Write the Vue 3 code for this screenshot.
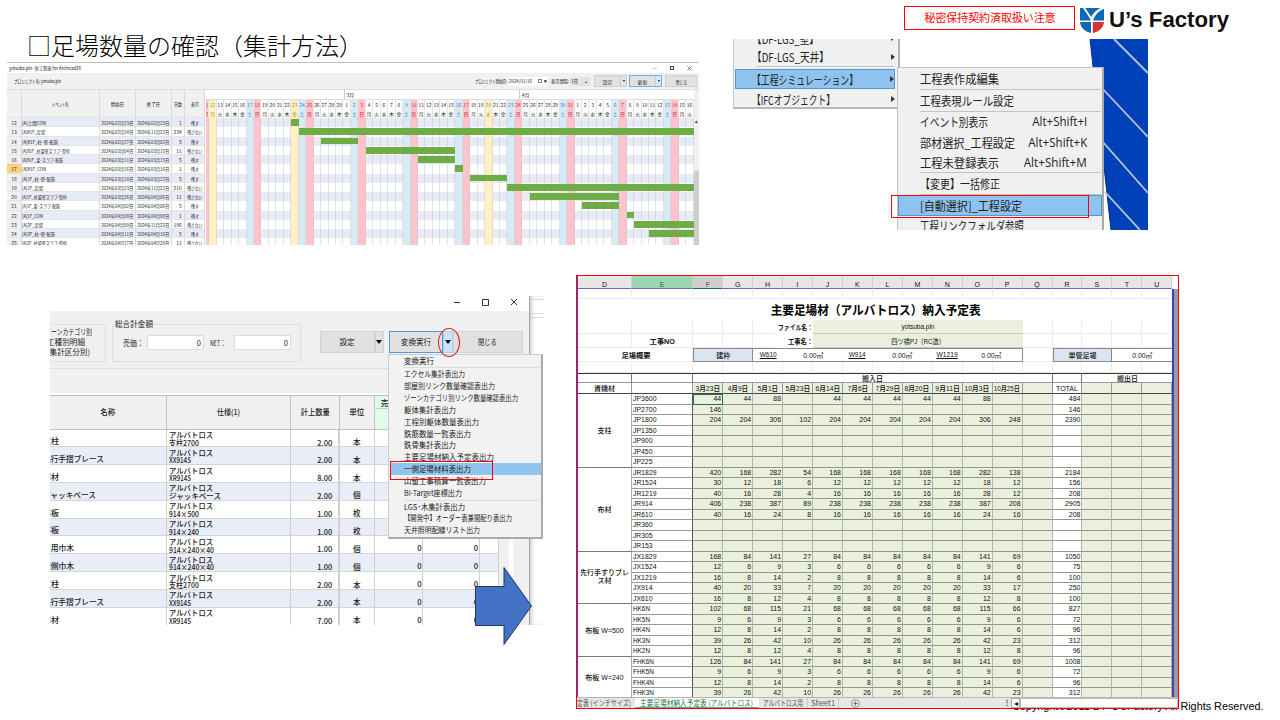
<script setup>
// Condenses or widens a run of text horizontally so that it takes the given width.
// With the `tight` modifier the layout width follows the drawn width.
const vFit = {
  mounted(el, { value, modifiers }) {
    if (!value) return
    const w = el.getBoundingClientRect().width
    if (!w) return
    el.style.transform = `scaleX(${value / w})`
    if (modifiers.tight) el.style.marginRight = `${value - w}px`
  },
}

/* ---------- schedule chart ---------- */
const weekdays = ['日', '月', '火', '水', '木', '金', '土']
const holidays = [12, 23, 49]
const days = []
for (let n = 11; n <= 76; n++) {
  const label = n <= 29 ? n : n <= 60 ? n - 29 : n - 60
  const wd = (n - 11) % 7
  const kind = holidays.includes(n) ? 'hol' : wd === 0 ? 'sun' : wd === 6 ? 'sat' : ''
  days.push({ n, label: n === 11 ? '1' : label, wd: weekdays[wd], kind, col: n - 10 })
}
// [no, name, name width, start, end, days, shown, first day, last day]; days count from Feb 1
const tasks = [
  [12, '[A]土間CON', 24, '2024年02月23日', '2024年02月23日', 1, '残す', 23, 23],
  [13, '[A]B1F_足場', 23, '2024年02月24日', '2024年11月22日', 234, '残さない', 24, 76],
  [14, '[A]B1F_柱･壁-配筋', 36, '2024年02月27日', '2024年03月02日', 5, '残す', 27, 31],
  [15, '[A]B1F_柱梁壁スラブ-型枠', 48, '2024年03月04日', '2024年03月15日', 11, '残さない', 33, 44],
  [16, '[A]B1F_梁･スラブ-配筋', 41, '2024年03月11日', '2024年03月15日', 5, '残す', 40, 44],
  [17, '[A]B1F_CON', 24, '2024年03月16日', '2024年03月16日', 1, '残す', 45, 45],
  [18, '[A]1F_柱･壁-配筋', 33, '2024年03月18日', '2024年03月22日', 5, '残す', 47, 51],
  [19, '[A]1F_足場', 21, '2024年03月23日', '2024年11月22日', 210, '残さない', 52, 76],
  [20, '[A]1F_柱梁壁スラブ-型枠', 45, '2024年03月26日', '2024年04月06日', 11, '残さない', 55, 66],
  [21, '[A]1F_梁･スラブ-配筋', 38, '2024年04月02日', '2024年04月06日', 5, '残す', 62, 66],
  [22, '[A]1F_CON', 21, '2024年04月08日', '2024年04月08日', 1, '残す', 68, 68],
  [23, '[A]2F_足場', 21, '2024年04月09日', '2024年11月22日', 196, '残さない', 69, 76],
  [24, '[A]2F_柱･壁-配筋', 33, '2024年04月11日', '2024年04月16日', 5, '残す', 71, 76],
  [25, '[A]2F_柱梁壁スラブ-型枠', 45, '2024年04月17日', '2024年04月29日', 11, '残さない', 0, 0],
]

/* ---------- quantity table ---------- */
const items = [
  ['支柱', 16, '支柱2700', 30, '2.00', '本'],
  ['先行手摺ブレース', 61, 'XX914S', 22, '2.00', '本'],
  ['布材', 16, 'XR914S', 22, '8.00', '本'],
  ['ジャッキベース', 53, 'ジャッキベース', 52, '2.00', '個'],
  ['布板', 16, '914×500', 30, '1.00', '枚'],
  ['布板', 16, '914×240', 30, '1.00', '枚'],
  ['専用巾木', 31, '914×240×40', 45, '1.00', '個'],
  ['両側巾木', 31, '914×240×40', 45, '1.00', '個'],
  ['支柱', 16, '支柱2700', 30, '2.00', '本'],
  ['先行手摺ブレース', 61, 'XX914S', 22, '2.00', '本'],
  ['布材', 16, 'XR914S', 22, '7.00', '本'],
]
const menu = [
  ['変換実行', 30], null,
  ['エクセル集計表出力', 61], ['部屋別リンク数量確認表出力', 91], ['ゾーンカテゴリ別リンク数量確認表出力', 114],
  ['躯体集計表出力', 52], ['工程別躯体数量表出力', 75], ['鉄筋数量一覧表出力', 67], ['鉄骨集計表出力', 52],
  ['主要足場材納入予定表出力', 90], ['一側足場材料表出力', 67, 'on'], ['山留工事積算一覧表出力', 82],
  ['BI-Target座標出力', 58], null,
  ['LGS･木集計表出力', 61], ['【開発中】オーダー表兼間配り表出力', 108], ['天井照明配線リスト出力', 76],
]

/* ---------- worksheet ---------- */
const letters = 'DEFGHIJKLMNOPQRSTU'.split('')
const dates = ['3月23日', '4月9日', '5月1日', '5月23日', '6月14日', '7月6日', '7月29日', '8月20日', '9月11日', '10月3日', '10月25日']
const row = (name, a, b, c, d, f, g, total) => [name, [a, b, c, d, b, b, b, b, b, f, g, '', total, '', '', '']]
const blank = (name) => row(name, '', '', '', '', '', '', '')
const groups = [
  ['支柱', [
    ['JP3600', [44, 44, 88, '', 44, 44, 44, 44, 44, 88, '', '', 484, '', '', '']],
    ['JP2700', [146, '', '', '', '', '', '', '', '', '', '', '', 146, '', '', '']],
    row('JP1800', 204, 204, 306, 102, 306, 248, 2390),
    blank('JP1350'), blank('JP900'), blank('JP450'), blank('JP225')]],
  ['布材', [
    row('JR1829', 420, 168, 282, 54, 282, 138, 2184), row('JR1524', 30, 12, 18, 6, 18, 12, 156),
    row('JR1219', 40, 16, 28, 4, 28, 12, 208), row('JR914', 406, 238, 387, 89, 387, 208, 2905),
    row('JR610', 40, 16, 24, 8, 24, 16, 208), blank('JR360'), blank('JR305'), blank('JR153')]],
  ['先行手すりブレス材', [
    row('JX1829', 168, 84, 141, 27, 141, 69, 1050), row('JX1524', 12, 6, 9, 3, 9, 6, 75),
    row('JX1219', 16, 8, 14, 2, 14, 6, 100), row('JX914', 40, 20, 33, 7, 33, 17, 250),
    row('JX610', 16, 8, 12, 4, 12, 8, 100)]],
  ['布板 W=500', [
    row('HK6N', 102, 68, 115, 21, 115, 66, 827), row('HK5N', 9, 6, 9, 3, 9, 6, 72),
    row('HK4N', 12, 8, 14, 2, 14, 6, 96), row('HK3N', 39, 26, 42, 10, 42, 23, 312),
    row('HK2N', 12, 8, 12, 4, 12, 8, 96)]],
  ['布板 W=240', [
    row('FHK6N', 126, 84, 141, 27, 141, 69, 1008), row('FHK5N', 9, 6, 9, 3, 9, 6, 72),
    row('FHK4N', 12, 8, 14, 2, 14, 6, 96), row('FHK3N', 39, 26, 42, 10, 42, 23, 312)]],
]
</script>

<template>
  <main class="slide">
    <h1 class="heading">□足場数量の確認（集計方法）</h1>
    <div class="notice"><span v-fit="131">秘密保持契約済取扱い注意</span></div>
    <div class="brand">
      <svg width="24" height="25" viewBox="0 0 24 25">
        <path d="M0 0H24V12.500H0Z" fill="#0a68b4" />
        <path d="M0 14H11V25C4.500 23.500 0.600 19.500 0 14Z" fill="#0a68b4" />
        <path d="M12.800 14H24C23.400 19.500 19.500 23.500 12.800 25Z" fill="#d9342b" />
        <path d="M3.500 -1L12 12" stroke="#fff" stroke-width="1.800" fill="none" />
        <path d="M10.800 14V9.500C13 5 17 1.500 21.500 -.5H24V.8C18.500 3 15 7 13 12.500V14Z" fill="#fff" />
      </svg>
      <b v-fit="120">U’s Factory</b>
    </div>
    <p class="copyright"><span v-fit="251.500">Copyright©2011-24 &nbsp;U’sFactory All Rights Reserved.</span></p>

    <!-- schedule chart window -->
    <section class="gantt">
      <div class="g-title"><span v-fit="72">yotsuba.pln -新工程表 for Archicad26</span>
        <i class="min"></i><i class="max"></i><svg width="5" height="5" viewBox="0 0 5 5"><path d="M.5 .5L4.500 4.500M4.500 .5L.5 4.500" stroke="#444" stroke-width=".7" /></svg>
      </div>
      <div class="g-tools">
        <span class="proj"><span v-fit="47">プロジェクト名: yotsuba.pln</span></span>
        <span class="lab"><span v-fit="32">プロジェクト開始日:</span></span>
        <div class="g-date"><span v-fit="23">2024/01/16</span><i></i><b>▾</b></div>
        <span class="lab lab2"><span v-fit="18">表示間隔:</span></span>
        <div class="g-sel"><span v-fit="7">1日</span><b>⌄</b></div>
        <div class="g-btn"><span>設定</span><i></i></div>
        <div class="g-btn blue"><span>更新</span><i></i></div>
        <div class="g-btn last"><em v-fit="11">閉じる</em></div>
      </div>
      <div class="g-body">
        <div class="g-table">
          <div class="g-row head"><span></span><span><em v-fit="17">イベント名</em></span><span><em v-fit="13">開始日</em></span><span><em v-fit="13">終了日</em></span><span><em v-fit="8">日数</em></span><span><em v-fit="8">表示</em></span></div>
          <div v-for="t in tasks" :key="t[0]" class="g-row" :class="{ even: t[0] % 2 === 0, cur: t[0] === 17 }">
            <span><em>{{ t[0] }}</em></span><span><em v-fit="t[2]">{{ t[1] }}</em></span>
            <span><em v-fit="32">{{ t[3] }}</em></span><span><em v-fit="32">{{ t[4] }}</em></span>
            <span><em>{{ t[5] }}</em></span><span><em v-fit="t[6] === '残す' ? 8 : 15">{{ t[6] }}</em></span>
          </div>
        </div>
        <div class="g-cal">
          <div class="months"><span>3月</span><span>4月</span></div>
          <div class="dayhead">
            <div v-for="d in days" :key="d.n" :class="d.kind"><span>{{ d.label }}</span><span>{{ d.wd }}</span></div>
          </div>
          <div class="plot">
            <template v-for="(t, i) in tasks" :key="t[0]"><div v-if="i % 2 === 0" class="stripe" :style="{ gridRow: i + 1 }"></div></template>
            <div v-for="d in days" :key="d.n" class="daycol" :class="d.kind" :style="{ gridColumn: d.col }"></div>
            <template v-for="(t, i) in tasks" :key="'b' + t[0]">
              <div v-if="t[7]" class="bar" :style="{ gridRow: i + 1, gridColumn: `${t[7] - 10} / ${t[8] - 9}` }"></div>
            </template>
          </div>
        </div>
        <div class="g-scroll"><span>▴</span><i></i></div>
      </div>
    </section>

    <!-- cascading menu over the model view -->
    <section class="cascade">
      <svg class="roof" width="60" height="191" viewBox="0 0 60 191">
        <path d="M2 0H60V191H23L15 120Z" fill="#0040b8" />
        <g stroke="#0a2f96" stroke-width="1"><path d="M2 0L23 191" /></g>
        <g stroke="#315fc4" stroke-width="1" stroke-dasharray="1 5"><path d="M12 0L35 191M30 0L51 191M47 0L60 130" /></g>
        <g stroke="#b7cbd5" stroke-width="1.800"><path d="M26 0L60 34M12 47L60 98M14 102L60 154M17 153L52 191" /></g>
      </svg>
      <div class="m1">
        <div><span v-fit.tight="67">【DF-LGS_壁】</span><i></i></div>
        <div><span v-fit.tight="77">【DF-LGS_天井】</span><i></i></div>
        <hr />
        <div class="sel"><span v-fit.tight="106">【工程シミュレーション】</span><i></i></div>
        <div class="ifc"><span v-fit.tight="83">【IFCオブジェクト】</span><i></i></div>
      </div>
      <div class="m2">
        <div><span v-fit="79">工程表作成編集</span></div>
        <hr />
        <div><span v-fit="94">工程表現ルール設定</span></div>
        <hr />
        <div class="k"><span v-fit.tight="68">イベント別表示</span><kbd v-fit="55">Alt+Shift+I</kbd></div>
        <div class="k"><span v-fit.tight="95">部材選択_工程設定</span><kbd v-fit="59">Alt+Shift+K</kbd></div>
        <div class="k"><span v-fit.tight="79">工程未登録表示</span><kbd v-fit="63">Alt+Shift+M</kbd></div>
        <hr />
        <div><span v-fit="80">【変更】一括修正</span></div>
        <hr />
        <div class="sel"><span v-fit="102">[自動選択]_工程設定</span></div>
        <div><span v-fit="104">工程リンクフォルダ参照</span></div>
      </div>
    </section>
    <div class="mark mark-auto"></div>

    <!-- quantity window -->
    <section class="qty">
      <div class="window">
        <div class="q-title"><svg width="70" height="12" viewBox="0 0 70 12"><path d="M1 6.500H7M29.500 3.500H35.500V9.500H29.500ZM58 3L64 9M64 3L58 9" fill="none" stroke="#333" stroke-width="1" /></svg></div>
        <div class="q-tools">
          <div class="box kinds"><span v-fit="47">ゾーンカテゴリ別</span><span v-fit="38">工種別明細</span><span v-fit="43">(集計区分別)</span></div>
          <div class="box sum"><span class="legend" v-fit="38">総合計金額</span><span v-fit="22">売価：</span><div class="field">0</div><span v-fit="21">NET：</span><div class="field">0</div></div>
          <div class="btn"><span>設定</span></div><div class="drop"><i></i></div>
          <div class="btn run"><span>変換実行</span></div><div class="drop hot"><i></i></div>
          <div class="btn close"><span v-fit="19">閉じる</span></div>
        </div>
        <div class="q-strip"></div>
        <div class="q-area">
          <div class="q-grid">
            <div class="q-row q-head">
              <span>名称</span><span><em v-fit="23">仕様(1)</em></span><span><em v-fit="29">計上数量</em></span><span>単位</span>
              <span class="sale"><em>売価</em></span><span class="sale"></span><span></span>
            </div>
            <div v-for="(r, i) in items" :key="i" class="q-row">
              <span class="nm"><em v-fit="r[1]">{{ r[0] }}</em></span>
              <span class="spec"><em v-fit="44">アルバトロス</em><em v-fit="r[3]">{{ r[2] }}</em></span>
              <span class="num"><em v-fit="15">{{ r[4] }}</em></span><span class="unit">{{ r[5] }}</span>
              <span class="zero">0</span><span class="zero">0</span><span></span>
            </div>
          </div>
          <div class="q-side"></div>
        </div>
      </div>
      <div class="behind"></div>
    </section>
    <div class="popup">
      <template v-for="(m, i) in menu" :key="i">
        <hr v-if="!m" />
        <div v-else :class="m[2]"><span v-fit="m[1]">{{ m[0] }}</span></div>
      </template>
    </div>
    <div class="ring"></div>
    <div class="mark mark-list"></div>
    <svg class="arrow" width="60" height="82" viewBox="0 0 60 82">
      <path d="M1.500 20.500H30V1.500L57.500 40L30 78.500V59.500H1.500Z" fill="#4472c4" stroke="#1f3763" stroke-width="1" />
    </svg>

    <!-- worksheet -->
    <section class="excel">
      <div class="view">
        <div class="sheet">
          <div v-for="(l, i) in letters" :key="l" class="col" :class="{ e: l === 'E', f: l === 'F' }" :style="{ gridColumn: i + 1 }">{{ l }}</div>
          <template v-for="r in 6" :key="'g' + r">
            <div v-for="c in 18" :key="c" v-show="r !== 2" class="faint" :style="{ gridRow: r + 1, gridColumn: c }"></div>
          </template>
          <div class="doc-title"><span v-fit="210">主要足場材（アルバトロス）納入予定表</span></div>
          <div class="tag t1"><span v-fit="35">ファイル名：</span></div>
          <div class="green v1"><span v-fit="33">yotsuba.pln</span></div>
          <div class="tag t0"><span v-fit="25">工事NO</span></div>
          <div class="tag t2"><span v-fit="25">工事名：</span></div>
          <div class="green v2"><span v-fit="54">四ツ橋PJ（RC造）</span></div>
          <div class="tag t3"><span v-fit="29">足場概要</span></div>
          <div class="chip c1"><span>建枠</span></div>
          <div class="specs"><u v-fit="17">W610</u><span v-fit="20">0.00㎡</span><u v-fit="17">W914</u><span v-fit="20">0.00㎡</span><u v-fit="21">W1219</u><span v-fit="20">0.00㎡</span></div>
          <div class="chip c2"><span v-fit="28">単管足場</span></div>
          <div class="specs tube"><span v-fit="20">0.00㎡</span></div>
          <div class="th a"></div><div class="th b"></div><div class="th c">搬入日</div><div class="th d"></div><div class="th e2">搬出日</div>
          <div class="th2 mat">資機材</div><div class="th2 n2"></div>
          <div v-for="(d, i) in dates" :key="d" class="th2 g" :style="{ gridColumn: i + 3 }"><span v-fit="d.length > 5 ? 26 : d.length > 4 ? 24.5 : 20.500">{{ d }}</span></div>
          <div class="th2 g"></div><div class="th2"><span v-fit="22">TOTAL</span></div><div class="th2 g"></div><div class="th2 g"></div><div class="th2 g"></div>
          <template v-for="g in groups" :key="g[0]">
            <div class="grp" :style="{ gridRow: `span ${g[1].length}` }"><span :class="{ wide: g[0].length > 8 }">{{ g[0] }}</span></div>
            <template v-for="r in g[1]" :key="r[0]">
              <div class="part"><span v-fit="r[0].startsWith('FHK') ? 21 : r[0].startsWith('HK') ? 17 : r[0].length > 5 ? 23.500 : 19.500">{{ r[0] }}</span></div>
              <div v-for="(v, i) in r[1]" :key="i" class="val" :class="{ w: i === 12, pick: r[0] === 'JP3600' && i === 0 }">{{ v }}</div>
            </template>
          </template>
        </div>
        <div class="outside"></div>
      </div>
      <div class="tabs">
        <span class="tab first"><span v-fit="54">定表 (インチサイズ)</span></span>
        <span class="tab act"><span v-fit="113">主要足場材納入予定表 (アルバトロス)</span></span>
        <span class="tab alb"><span v-fit="40">アルバトロス用</span></span>
        <span class="tab sh"><span v-fit="24">Sheet1</span></span>
        <svg width="9" height="9" viewBox="0 0 9 9"><circle cx="4.500" cy="4.500" r="3.900" fill="none" stroke="#777" stroke-width=".7" /><path d="M2.500 4.500H6.500M4.500 2.500V6.500" stroke="#666" /></svg>
        <div class="hs"><b>⋮</b><i>◂</i><s></s></div>
      </div>
    </section>
  </main>
</template>

<style>
html, body { margin: 0; overflow: hidden; background: #fff; }
</style>

<style scoped>
* { box-sizing: border-box; }
.slide { position: relative; width: 1280px; height: 720px; overflow: hidden; background: #fff; color: #111; font-family: "Noto Sans CJK JP", sans-serif; }
span, em, b, u, kbd { white-space: nowrap; font-style: normal; }
i { font-style: normal; }
.heading { position: absolute; left: 27px; top: 27px; margin: 0; font-size: 24px; line-height: 36px; font-weight: 300; color: #000; }
.notice { position: absolute; left: 904px; top: 6px; width: 171px; height: 24px; border: 1px solid #f00; color: #f00; font-size: 11px; line-height: 20px; display: flex; align-items: flex-start; justify-content: center; }
.brand { position: absolute; left: 1080px; top: 8px; display: flex; align-items: center; gap: 5px; }
.brand b { font: bold 21.500px/25px "Liberation Sans", Arial, sans-serif; transform-origin: left; color: #111; }
.copyright { position: absolute; left: 1012px; top: 699px; margin: 0; font: 10.600px/14px "Liberation Sans", Arial, sans-serif; color: #000; }
.copyright span { display: inline-block; transform-origin: left; }
.mark { position: absolute; border: 1.300px solid #f00; }
.mark-auto { left: 891px; top: 195px; width: 198px; height: 23px; }
.mark-list { left: 390px; top: 461px; width: 103px; height: 19px; }

/* schedule chart */
.gantt { position: absolute; left: 7px; top: 62px; width: 692px; height: 183px; border-top: 1px solid #bdbdbd; overflow: hidden; font-size: 4.900px; color: #222; }
.g-title { height: 10px; padding: 0 7px 0 2px; display: flex; align-items: center; gap: 13px; line-height: 10px; }
.g-title > span { transform-origin: left; margin-right: auto; }
.g-title .min { width: 4px; height: 1px; background: #ccc; }
.g-title .max { width: 4px; height: 4px; border: .7px solid #444; }
.g-tools { height: 17px; background: #f0f0f0; border-bottom: 1px solid #ddd; display: grid; grid-template-columns: 7px 461px 34px 38px 23px 20px 4px 33px 2px 33px 3px 32px; align-items: center; line-height: 12px; }
.g-tools > .proj { grid-column: 2; }
.g-tools span span, .g-date span, .g-sel span { display: inline-block; transform-origin: left; }
.lab2 { padding-left: 4px; }
.g-date { height: 9px; background: #fff; display: flex; align-items: center; overflow: hidden; gap: 2px; }
.g-date i { width: 4px; height: 4px; border: .7px solid #789; margin-left: auto; }
.g-sel { height: 9px; background: #e3e3e3; display: flex; justify-content: space-between; align-items: center; padding: 0 2px 0 1px; }
.g-btn { grid-column: 8; height: 12px; background: #e1e1e1; border: .5px solid #d0d0d0; display: flex; }
.g-btn span { flex: 1; text-align: center; line-height: 11px; }
.g-btn i { width: 6px; border-left: 1px solid #ccc; position: relative; display: flex; align-items: center; justify-content: center; }
.g-btn i::after { content: ""; border: 1.700px solid transparent; border-top: 2.500px solid #111; border-bottom: 0; }
.g-btn.blue { grid-column: 10; border: 1px solid #6db1e8; }
.g-btn.blue i { background: #d4e9f8; }
.g-btn.last { grid-column: 12; justify-content: center; line-height: 11px; }
.g-body { display: grid; grid-template-columns: 198.500px 488.500px 5px; height: 156px; overflow: hidden; }
.g-row { display: grid; grid-template-columns: 15px 77.500px 36.500px 35.500px 13.200px 20.800px; height: 9.270px; line-height: 9px; }
.g-row > span { display: flex; justify-content: center; border-right: 1px solid #dadada; border-bottom: .5px solid #e4e4e4; overflow: hidden; min-width: 0; }
.g-row > span:nth-child(2) { justify-content: flex-start; }
.g-row > span:nth-child(2) em { transform-origin: left; }
.g-row > span:nth-child(5) { justify-content: flex-end; padding-right: 2px; }
.g-row.even > span { background: #e7ebf6; }
.g-row > span:first-child { background: #f0f0f0; }
.g-row.cur > span:first-child { background: #ffd07c; }
.g-row.head { height: 28px; line-height: 28px; }
.g-row.head > span { background: #f0f0f0; justify-content: center; padding: 0; }
.g-row.head > span:nth-child(2) em { transform-origin: center; }
.g-cal { min-width: 0; }
.months { height: 9.500px; display: flex; line-height: 9px; padding-left: 138px; border-bottom: .5px solid #ddd; }
.months span { width: 231.100px; border-left: 1px solid #ccc; padding-left: 2px; }
.dayhead, .plot { display: grid; grid-template-columns: 3.800px repeat(65, 7.455px); }
.dayhead > div { display: flex; flex-direction: column; height: 18.500px; line-height: 9.200px; align-items: center; border-right: .5px solid #e4e4e4; overflow: hidden; }
.dayhead > div.sun { background: #ffc3cb; color: #d71f35; }
.dayhead > div.sat { background: #d9eaf7; color: #1684ce; }
.dayhead > div.hol { background: #fff0c6; color: #b98a10; }
.plot { grid-template-rows: repeat(14, 9.270px); }
.stripe { grid-column: 1 / -1; background: #e7ebf6; }
.daycol { grid-row: 1 / -1; border-right: 1px solid rgba(190, 190, 195, .42); }
.daycol.sun { background: #ffc3cb; }
.daycol.sat { background: #d9eaf7; }
.daycol.hol { background: #fff0c6; }
.bar { background: #6eac46; height: 6.800px; margin-top: 1px; }
.g-scroll { background: #f0f0f0; display: flex; flex-direction: column; justify-content: space-between; line-height: 4px; padding-top: 29px; align-items: center; }
.g-scroll i { width: 5px; height: 77px; background: #cdcdcd; }

/* cascading menu */
.cascade { position: absolute; left: 733px; top: 39px; width: 415px; height: 191px; overflow: hidden; font-size: 12px; color: #222; }
.cascade .roof { position: absolute; right: 0; top: 0; }
.cascade span, .cascade kbd { display: inline-block; transform-origin: left; font-family: inherit; }
.cascade kbd { transform-origin: right; font-family: "Open Sans", "Noto Sans CJK JP", sans-serif; }
.cascade hr { border: 0; border-top: 1px solid #c4c4c4; margin: 0 1px 0 22px; width: auto; }
.m1 { position: absolute; left: 0; top: -11px; width: 167px; height: 81px; background: #f0f0f0; border: 1px solid #c6c6c6; border-right: 2px solid #b0b0b0; border-bottom: 2px solid #b8b8b8; padding: 0 3px 0 1px; }
.m1 div { height: 19px; padding-left: 17px; display: flex; align-items: center; justify-content: space-between; line-height: 19px; }
.m1 div:first-child { height: 18px; }
.m1 i { border: 3.500px solid transparent; border-left: 4.500px solid #333; border-right: 0; flex: none; }
.m1 .sel { height: 20px; margin-top: 2px; }
.m1 .ifc { height: 20px; }
.sel { background: #8fc3ef; border: 1px solid #4f97d5; }
.m1 .sel { padding-left: 16px; }
.m2 { position: absolute; left: 164px; top: 28px; width: 207px; height: 180px; background: #f0f0f0; border: 1px solid #c2c2c2; border-right: 2px solid #aaa; padding: 0; }
.m2 div { height: 21px; padding: 0 15px 0 22px; display: flex; justify-content: space-between; align-items: center; }
.m2 div.k { height: 20.300px; }
.m2 div.sel { height: 21px; padding-left: 21px; }
.m2 div:last-child { height: 19px; }
.m2 hr { margin-top: -.2px; }

/* quantity window */
.qty { position: absolute; left: 50px; top: 296px; width: 494px; height: 329px; display: flex; font-size: 7.600px; color: #222; overflow: hidden; }
.window { width: 480px; border-right: 1.500px solid #a5a5a5; background: #f0f0f0; display: flex; flex-direction: column; }
.behind { flex: 1; background: linear-gradient(#ddd, #ddd) 0 3px / 100% 1px no-repeat, linear-gradient(#ddd, #ddd) 0 17px / 100% 1px no-repeat, linear-gradient(#ddd, #ddd) 0 21px / 100% 1px no-repeat; box-shadow: 3px 0 5px -2px #bbb inset; }
.q-title { height: 15px; background: #fff; display: flex; justify-content: flex-end; padding-right: 6px; flex: none; }
.q-tools { height: 57px; display: grid; grid-template-columns: 56px 6px 189px 18.500px 55px 9.500px 5px 54px 9.500px 70px; align-items: start; padding-top: 12.500px; flex: none; }
.box { border: 1px solid #e0e0e0; height: 38px; line-height: 10px; }
.box span { transform-origin: left; }
.kinds { display: flex; flex-direction: column; align-items: flex-start; border-left: 0; padding-top: 2px; height: 38px; }
.kinds span { margin-left: -5px; }
.kinds span:nth-child(2) { margin-left: -3px; }
.kinds span:nth-child(3) { margin-left: -3px; }
.sum { grid-column: 3; display: grid; position: relative; grid-template-columns: 24px 57px 30px 57px; padding: 10px 0 0 10px; line-height: 16px; }
.sum > span:nth-child(4) { padding-left: 6px; transform-origin: 6px; }
.legend { position: absolute; left: 2px; top: -9px; background: #f0f0f0; }
.field { height: 15px; background: #fff; border: .5px solid #ddd; text-align: right; line-height: 14px; padding-right: 2px; }
.btn { grid-column: 5; margin-top: 7px; height: 22.500px; background: #e1e1e1; border: 1px solid #d3d3d3; line-height: 20px; text-align: center; }
.btn span { display: inline-block; }
.btn.run { grid-column: 8; border-color: #4d9dde; }
.btn.close { grid-column: 10; }
.drop { grid-column: 6; margin-top: 7px; height: 22.500px; background: #e1e1e1; border: 1px solid #d0d0d0; display: flex; align-items: center; justify-content: center; }
.drop i { border: 3.200px solid transparent; border-top: 4px solid #000; border-bottom: 0; }
.drop.hot { grid-column: 9; background: #cce4f7; border-color: #a8d0ee; }
.q-strip { height: 27px; border-top: 1px solid #dedede; border-bottom: 2px solid #fff; flex: none; }
.q-area { display: flex; flex: 1; min-height: 0; overflow: hidden; }
.q-grid { width: 449px; }
.q-side { flex: 1; border-left: 10px solid #f0f0f0; box-shadow: 4px 0 #fff inset; }
.q-row { display: grid; grid-template-columns: 116.500px 124px 49.500px 34.700px 48.800px 56.500px 19px; height: 17.830px; background: #fff; font-weight: 500; }
.q-row:nth-child(odd) { background: #e8edf8; }
.q-row > span { border-right: 1px solid #d0d0d0; border-bottom: .5px solid #d5d5d5; display: flex; min-width: 0; overflow: hidden; line-height: 8px; }
.q-row em { display: block; width: max-content; transform-origin: left; }
.q-row .nm { align-items: flex-end; padding-bottom: 1px; }
.q-row .nm em { margin-left: -7px; }
.q-row .spec { flex-direction: column; padding: 1.500px 0 0 2px; line-height: 7.600px; }
.q-row .num { justify-content: flex-end; padding: 9px 6px 0 0; border-right-width: 2px; }
.q-row .num em { transform-origin: right; }
.q-row .unit { justify-content: center; padding-top: 8.500px; }
.q-row .zero { justify-content: flex-end; padding: 8px 1px 0 0; }
.q-row.q-head { height: 34.500px; background: #f0f0f0; border-top: 1px solid #bbb; }
.q-head > span { align-items: center; justify-content: center; border-color: #c4c4c4; }
.q-head em { transform-origin: center; }
.q-head .sale { background: linear-gradient(#bcd4c9, #bcd4c9) 0 12px / 100% 1px no-repeat, #dffceb; align-items: flex-start; justify-content: flex-start; padding: 3px 0 0 6px; }
.popup { position: absolute; left: 388px; top: 353.500px; width: 155px; height: 185px; background: #f2f2f2; border: 1px solid #ccc; border-right: 2px solid #aaa; border-bottom: 2px solid #aaa; font-size: 7.600px; color: #222; }
.popup div { height: 11.850px; padding-left: 14px; margin-left: 1px; line-height: 11.500px; }
.popup .on { background: #91c5ef; }
.popup span { display: inline-block; transform-origin: left; }
.popup hr { border: 0; border-top: 1px solid #ddd; margin: 1px 0 0 14px; height: .5px; }
.ring { position: absolute; left: 438px; top: 328px; width: 22px; height: 29px; border: 1.300px solid #e02020; border-radius: 50%; }
.arrow { position: absolute; left: 474px; top: 565.500px; }

/* worksheet */
.excel { position: absolute; left: 576px; top: 275px; width: 603px; height: 434px; border: 1px solid #f00; background: #fff; color: #111; font: 7px "Liberation Sans", "Noto Sans CJK JP", sans-serif; overflow: hidden; }
.view { height: 421px; display: flex; overflow: hidden; }
.outside { flex: 1; margin-top: 13px; background: #9b9b9b; border-left: 2px solid #4040c0; }
.sheet { flex: none; width: 595px; display: grid; grid-template-columns: 54px 61.300px repeat(16, 29.950px); grid-template-rows: 13px 10.300px 21.100px 13.800px 14px 13.500px 10.900px 10.800px 10.650px repeat(29, 10.514px); border-left: 1.500px solid #4848c8; }
.sheet > div { min-width: 0; min-height: 0; }
.sheet span, .sheet u { display: inline-block; }
.col { grid-row: 1; background: #e6e6e6; border-right: 1px solid #d0d0d0; border-bottom: 1px solid #6969c8; text-align: center; line-height: 17px; }
.col.e { background: #9dd6b6; color: #1d6b45; }
.col.f { background: #cfcfcf; color: #1d6b45; border-bottom: 1px solid #217346; }
.faint { border-right: 1px solid #ececec; border-bottom: 1px solid #ececec; }
.doc-title { grid-area: 3 / 1 / 4 / 19; background: #fff; font: bold 12.500px/22px "Noto Sans CJK JP", sans-serif; text-align: center; color: #000; }
.tag { display: flex; align-items: center; justify-content: center; font-weight: bold; background: #fff; z-index: 1; }
.t1 { grid-area: 4 / 5 / 5 / 7; justify-content: flex-end; margin-left: 22px; }
.t2 { grid-area: 5 / 5 / 6 / 7; justify-content: flex-end; margin-left: 22px; }
.t1 span, .t2 span { transform-origin: right; }
.t0 { grid-area: 5 / 2; margin: 1px; }
.t3 { grid-area: 6 / 1 / 7 / 3; margin: 1px; }
.green { background: #eaf0dd; display: flex; justify-content: center; align-items: center; border-bottom: 1px solid #c5cdb8; z-index: 1; }
.v1 { grid-area: 4 / 7 / 5 / 14; }
.v2 { grid-area: 5 / 7 / 6 / 14; }
.chip { background: #dae5f1; border: 1px solid #888; display: flex; align-items: center; justify-content: center; z-index: 1; font-weight: 500; }
.c1 { grid-area: 6 / 3 / 7 / 5; }
.c2 { grid-area: 6 / 15 / 7 / 17; }
.specs { grid-area: 6 / 5 / 7 / 14; display: grid; grid-template-columns: 1fr 2fr 1fr 2fr 1fr 2fr; justify-items: center; align-items: center; background: #fff; border: 1px solid #888; border-left: 0; z-index: 1; }
.specs.tube { grid-area: 6 / 17 / 7 / 19; grid-template-columns: 1fr; border-right: 0; }
.th { grid-row: 8; border-top: 1px solid #333; border-right: 1px solid #777; border-bottom: 1px solid #999; text-align: center; line-height: 9px; font-weight: 500; background: #fff; }
.th.a { grid-column: 1; }
.th.b { grid-column: 2; }
.th.c { grid-column: 3 / 15; }
.th.d { grid-column: 15; }
.th.e2 { grid-column: 16 / 19; border-right: 0; }
.th2 { grid-row: 9; border-right: 1px solid #999; border-bottom: 1px solid #444; display: flex; align-items: center; justify-content: center; font-weight: 500; }
.th2.mat { grid-column: 1; }
.g { background: #eaf0dd; }
.grp { grid-column: 1; border-right: 1px solid #aaa; border-bottom: 1px solid #777; display: flex; align-items: center; justify-content: center; text-align: center; font-weight: 500; }
.grp span.wide { width: 50px; white-space: normal; line-height: 8.500px; line-break: anywhere; }
.part { grid-column: 2; border-right: 1px solid #555; border-bottom: 1px solid #999; padding-left: 1px; line-height: 10.500px; }
.part span { transform-origin: left; }
.val { background: #eaf0dd; border-right: 1px solid #b2b8a6; border-bottom: 1px solid #92988a; text-align: right; line-height: 10.500px; padding-right: 1px; }
.val.w { background: #fff; }
.val.pick { outline: 1px solid #217346; outline-offset: -1px; }
.tabs { height: 12px; background: #e6e6e6; border-top: 1px solid #b5b5b5; display: flex; align-items: flex-start; font: 7.600px/9px "Noto Sans CJK JP", sans-serif; color: #555; }
.tabs svg { flex: none; margin-top: 1px; }
.tab span { display: inline-block; transform-origin: left; }
.tab { height: 10px; flex: none; overflow: hidden; }
.tab.first { width: 58px; }
.tab.act { width: 124px; background: #fff; color: #217346; border-bottom: 1px solid #6aa886; padding-left: 5px; margin-right: 4px; }
.tab.alb { width: 45px; border-right: 1px solid #ccc; }
.tab.sh { width: 31px; padding-left: 3px; border-right: 1px solid #ccc; margin-right: 12px; }
.hs { margin-left: auto; width: 175px; display: grid; grid-template-columns: 8px 9px 1fr; height: 9px; line-height: 8px; }
.hs i { background: #fff; border: .5px solid #aaa; text-align: center; color: #111; }
.hs s { background: #fff; border: .5px solid #bbb; }
</style>
